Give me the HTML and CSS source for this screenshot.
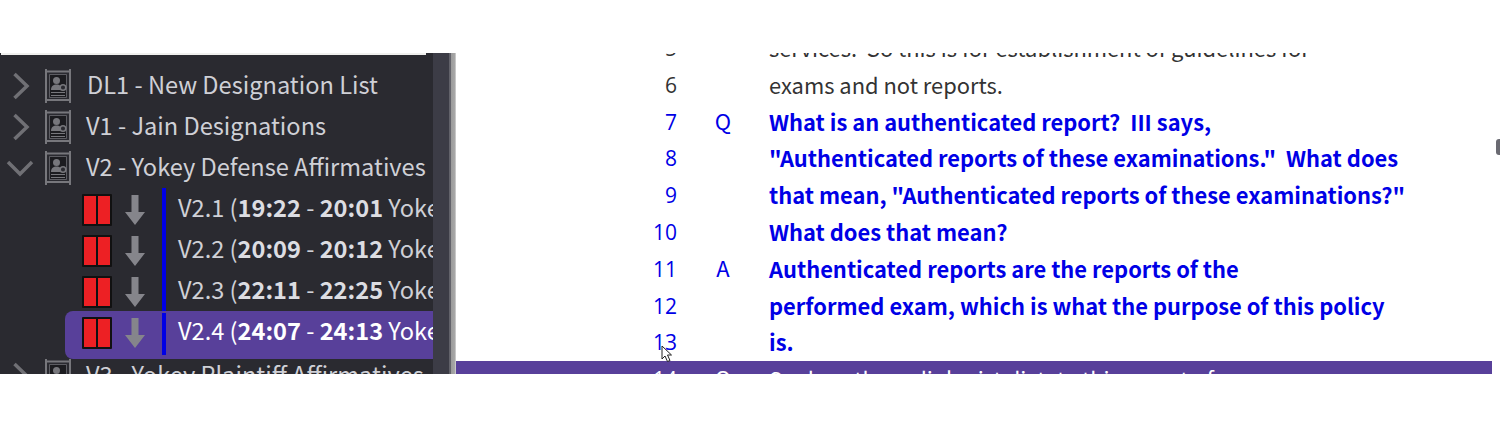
FILE: index.html
```html
<!DOCTYPE html>
<html lang="en">
<head>
    <meta charset="UTF-8">
    <meta name="viewport" content="width=device-width, initial-scale=1.0">
    <title>Designations</title>
    <link rel="stylesheet" href="styles.css">
</head>
<body>
    <svg class="icon-defs" width="0" height="0">
        <symbol id="docIcon" viewBox="0 0 26 34">
            <path d="M1 0v34M25 0v34M1 2.500h24M1 31h24" fill="none" stroke="currentColor" stroke-width="2"/>
            <path d="M4.500 5.500h17v23h-17z" fill="#1c1c20" stroke="currentColor" stroke-width="0.700"/>
            <circle cx="11.500" cy="11.500" r="3.500" fill="currentColor"/>
            <path d="M6 21c0-4 2.500-5.500 5.500-5.500s5.500 1.500 5.500 5.500z" fill="currentColor"/>
            <circle cx="18" cy="18.500" r="2.800" fill="#2a2a30" stroke="currentColor" stroke-width="1.500"/>
            <path d="M6 23.500h14M6 26.500h14" stroke="currentColor" stroke-width="1.200"/>
        </symbol>
        <symbol id="clipIcon" viewBox="0 0 30 32">
            <rect width="30" height="32" rx="1" fill="#111"/>
            <rect x="2" y="2" width="12" height="28" fill="#ed2024"/>
            <rect x="16" y="2" width="12" height="28" fill="#ed2024"/>
        </symbol>
    </svg>

    <div class="app">
        <!-- designation tree -->
        <div class="sidebar">
            <div class="tree">
                <div class="tree-row">
                    <svg class="chevron" viewBox="0 0 28 28"><path d="M8.500 2l12.500 12-12.500 12" /></svg>
                    <svg class="doc-icon"><use href="#docIcon"/></svg>
                    <span class="tree-label first">DL1 - New Designation List</span>
                </div>
                <div class="tree-row">
                    <svg class="chevron" viewBox="0 0 28 28"><path d="M8.500 2l12.500 12-12.500 12" /></svg>
                    <svg class="doc-icon"><use href="#docIcon"/></svg>
                    <span class="tree-label">V1 - Jain Designations</span>
                </div>
                <div class="tree-row">
                    <svg class="chevron" viewBox="0 0 28 28"><path d="M2 8l12 12 12-12" /></svg>
                    <svg class="doc-icon"><use href="#docIcon"/></svg>
                    <span class="tree-label">V2 - Yokey Defense Affirmatives</span>
                </div>
                <div class="clip-row">
                    <svg class="clip-icon"><use href="#clipIcon"/></svg>
                    <svg class="arrow" viewBox="0 0 20 30"><path d="M6.500 0h7v17h6.500l-10 13-10-13h6.500z"/></svg>
                    <span class="clip-bar"></span>
                    <span class="clip-label">V2.1 (<b>19:22</b> - <b>20:01</b> Yokey Defense</span>
                </div>
                <div class="clip-row">
                    <svg class="clip-icon"><use href="#clipIcon"/></svg>
                    <svg class="arrow" viewBox="0 0 20 30"><path d="M6.500 0h7v17h6.500l-10 13-10-13h6.500z"/></svg>
                    <span class="clip-bar"></span>
                    <span class="clip-label">V2.2 (<b>20:09</b> - <b>20:12</b> Yokey Defense</span>
                </div>
                <div class="clip-row">
                    <svg class="clip-icon"><use href="#clipIcon"/></svg>
                    <svg class="arrow" viewBox="0 0 20 30"><path d="M6.500 0h7v17h6.500l-10 13-10-13h6.500z"/></svg>
                    <span class="clip-bar"></span>
                    <span class="clip-label">V2.3 (<b>22:11</b> - <b>22:25</b> Yokey Defense</span>
                </div>
                <div class="clip-row selected">
                    <svg class="clip-icon"><use href="#clipIcon"/></svg>
                    <svg class="arrow" viewBox="0 0 20 30"><path d="M6.500 0h7v17h6.500l-10 13-10-13h6.500z"/></svg>
                    <span class="clip-bar"></span>
                    <span class="clip-label">V2.4 (<b>24:07</b> - <b>24:13</b> Yokey Defense</span>
                </div>
                <div class="tree-row">
                    <svg class="chevron" viewBox="0 0 28 28"><path d="M8.500 2l12.500 12-12.500 12" /></svg>
                    <svg class="doc-icon"><use href="#docIcon"/></svg>
                    <span class="tree-label">V3 - Yokey Plaintiff Affirmatives</span>
                </div>
            </div>
            <div class="side-scroll"></div>
        </div>
        <div class="splitter"></div>

        <!-- transcript -->
        <div class="transcript">
            <div class="lines">
                <div class="line"><span class="num">5</span><span class="who"></span><span class="txt">services.  So this is for establishment of guidelines for</span></div>
                <div class="line"><span class="num">6</span><span class="who"></span><span class="txt">exams and not reports.</span></div>
                <div class="line hit"><span class="num">7</span><span class="who">Q</span><span class="txt">What is an authenticated report?  III says,</span></div>
                <div class="line hit"><span class="num">8</span><span class="who"></span><span class="txt">"Authenticated reports of these examinations."  What does</span></div>
                <div class="line hit"><span class="num">9</span><span class="who"></span><span class="txt">that mean, "Authenticated reports of these examinations?"</span></div>
                <div class="line hit"><span class="num">10</span><span class="who"></span><span class="txt">What does that mean?</span></div>
                <div class="line hit"><span class="num">11</span><span class="who">A</span><span class="txt">Authenticated reports are the reports of the</span></div>
                <div class="line hit"><span class="num">12</span><span class="who"></span><span class="txt">performed exam, which is what the purpose of this policy</span></div>
                <div class="line hit"><span class="num">13</span><span class="who"></span><span class="txt">is.</span></div>
                <div class="line current"><span class="num">14</span><span class="who">Q</span><span class="txt">So does the radiologist dictate this report of</span></div>
            </div>
            <svg class="cursor" viewBox="0 0 12 18"><path d="M1 1v13l3-3 2.500 5.500 2.500-1-2.500-5.500h4z" fill="#fff" stroke="#222" stroke-width="1"/></svg>
            <div class="page-scroll"><span class="thumb"></span></div>
        </div>
    </div>
</body>
</html>
```

FILE: styles.css
```css
body {
    margin: 0;
    background: #fff;
    font-family: "Noto Sans CJK JP", "Noto Sans", sans-serif;
}

.icon-defs {
    display: block;
    height: 0;
}

.app {
    display: flex;
    height: 321px;
    margin-top: 53px;
    overflow: hidden;
}

.sidebar {
    display: flex;
    width: 449px;
    flex: none;
    background: #2a2a30;
}

.tree {
    width: 433px;
    flex: none;
    padding-top: 12px;
    overflow: hidden;
    box-sizing: border-box;
    position: relative;
}

/* white strip left over from the toolbar above the tree */
.tree::before {
    content: "";
    position: absolute;
    left: 1px;
    right: 7px;
    top: 0;
    height: 2px;
    background: #f0f0ee;
}

.tree-row,
.clip-row {
    display: flex;
    height: 41px;
    white-space: nowrap;
}

.tree-row {
    align-items: center;
}

.chevron {
    width: 28px;
    height: 28px;
    margin-left: 6px;
    flex: none;
    fill: none;
    stroke: #707075;
    stroke-width: 3.500;
}

.doc-icon {
    width: 26px;
    height: 34px;
    margin-left: 11px;
    flex: none;
    color: #77777c;
}

.tree-label {
    margin-left: 15px;
    padding-bottom: 4px;
    font-size: 23.600px;
    color: #cfd0d6;
}

.tree-label.first {
    margin-left: 16px;
}

.clip-row {
    margin-left: 65px;
    padding-left: 17px;
    border-radius: 8px 0 0 8px;
}

.clip-row.selected {
    height: 48px;
    margin-bottom: -4px;
    background: #58409a;
}

.clip-icon {
    width: 30px;
    height: 32px;
    margin-top: 6px;
    flex: none;
}

.arrow {
    width: 20px;
    height: 30px;
    margin-top: 7px;
    margin-left: 13px;
    flex: none;
    fill: #85858b;
}

.clip-bar {
    width: 4px;
    height: 41px;
    margin-left: 17px;
    flex: none;
    background: #0000e6;
}

.selected .clip-bar {
    height: 42px;
    margin-top: 2px;
}

.clip-label {
    margin-left: 12px;
    font-size: 23.600px;
    line-height: 39px;
    color: #cfd0d6;
}

.clip-label b {
    font-weight: 700;
    color: #dcdde2;
}

.selected .clip-label,
.selected .clip-label b {
    color: #fff;
}

.side-scroll {
    flex: 1;
    background: #3c3c46;
}

.splitter {
    width: 7px;
    flex: none;
    background: linear-gradient(90deg, #62626a 0, #62626a 35%, #9c9c9c 35%, #a8a8a8 85%, #e4e4e4 100%);
}

.transcript {
    flex: 1;
    display: flex;
    position: relative;
    overflow: hidden;
}

.lines {
    width: 1036px;
    flex: none;
    margin-top: -23px;
}

.line {
    display: grid;
    grid-template-columns: 221px 92px 1fr;
    height: 36.800px;
    line-height: 36.800px;
    font-size: 21.900px;
    color: #333;
    white-space: pre;
}

.num {
    text-align: right;
    font-family: "Open Sans", sans-serif;
    font-size: 21px;
}

.who {
    line-height: 33px;
    text-align: center;
    font-size: 22px;
}

.hit {
    color: #0000e6;
}

.hit .txt {
    font-weight: 700;
}

.current {
    background: #58409a;
    color: #fff;
}

.cursor {
    position: absolute;
    left: 205px;
    top: 292px;
    width: 12px;
    height: 18px;
}

.page-scroll {
    flex: 1;
    position: relative;
}

.thumb {
    position: absolute;
    right: 0;
    top: 86px;
    width: 4px;
    height: 16px;
    border-radius: 3px 0 0 3px;
    background: #6a6a72;
}
```
